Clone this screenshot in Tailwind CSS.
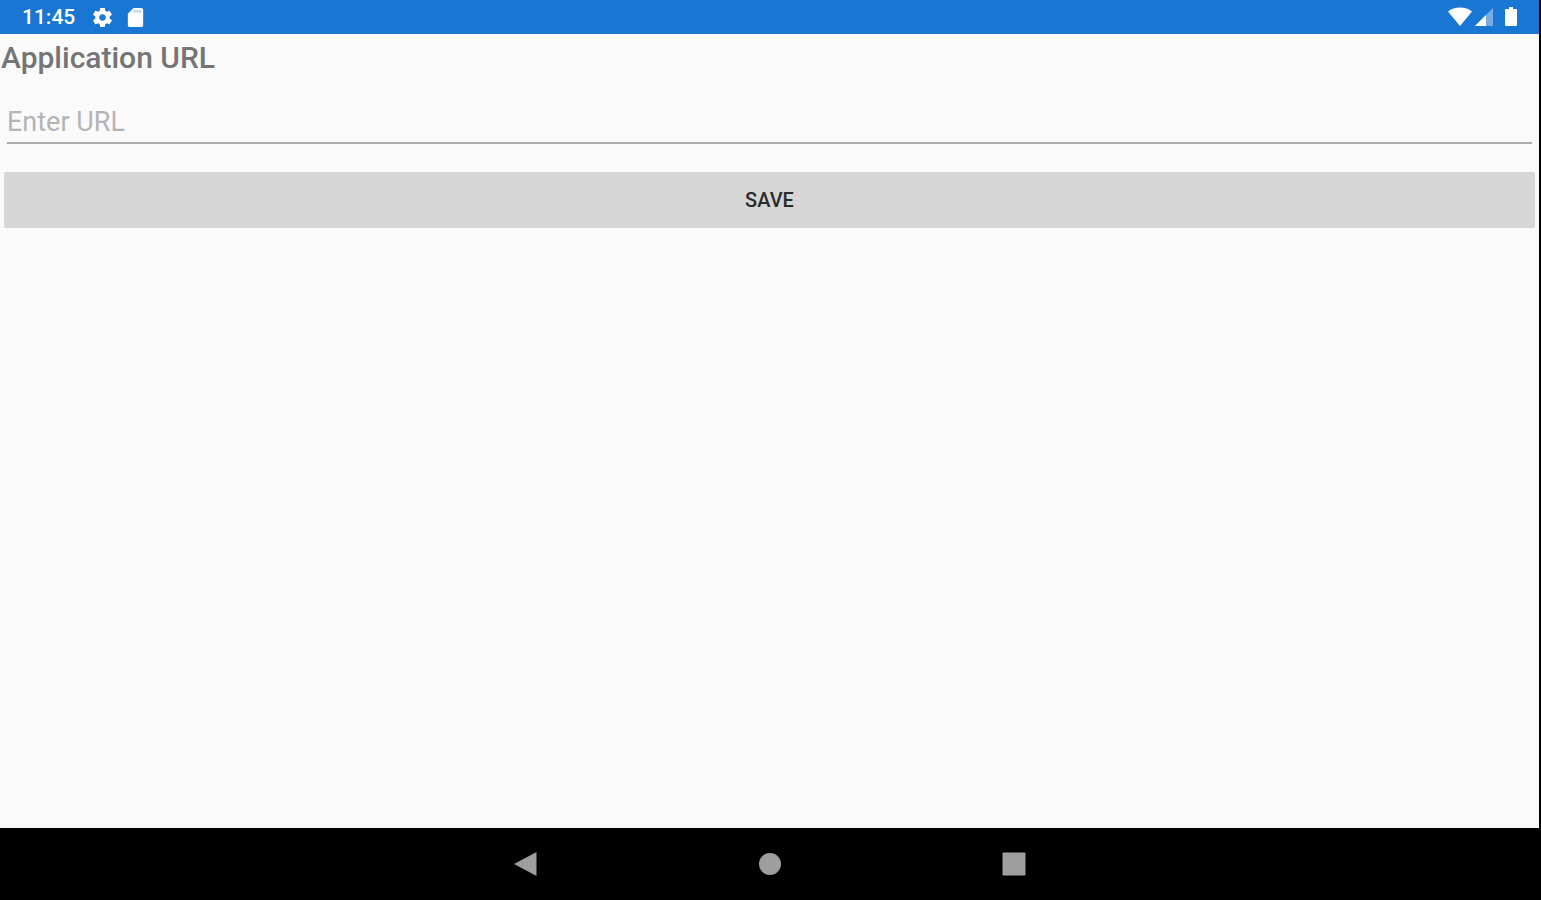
<!DOCTYPE html>
<html lang="en">
<head>
  <meta charset="UTF-8" />
  <meta name="viewport" content="width=device-width, initial-scale=1.0" />
  <title>Application URL</title>
  <script src="https://cdn.jsdelivr.net/npm/@tailwindcss/browser@4"></script>
</head>
<body class="bg-[#fafafa] min-h-screen flex flex-col border-r-2 border-black font-[Roboto,sans-serif]">
  <!-- Status bar -->
  <header class="h-[34px] shrink-0 bg-[#1976d2] text-white flex items-center justify-between px-[22px]">
    <div class="flex items-center">
      <span class="text-[21px] leading-6 font-medium">11:45</span>
      <svg class="ml-4 size-[23px]" viewBox="0 0 24 24" fill="currentColor" aria-hidden="true">
        <path d="M19.43 12.98c.04-.32.07-.64.07-.98s-.03-.66-.07-.98l2.11-1.65c.19-.15.24-.42.12-.64l-2-3.46c-.12-.22-.39-.3-.61-.22l-2.49 1c-.52-.4-1.08-.73-1.69-.98l-.38-2.65C14.46 2.18 14.25 2 14 2h-4c-.25 0-.46.18-.49.42l-.38 2.65c-.61.25-1.17.59-1.69.98l-2.49-1c-.23-.09-.49 0-.61.22l-2 3.46c-.13.22-.07.49.12.64l2.11 1.65c-.04.32-.07.65-.07.98s.03.66.07.98l-2.11 1.65c-.19.15-.24.42-.12.64l2 3.46c.12.22.39.3.61.22l2.49-1c.52.4 1.08.73 1.69.98l.38 2.65c.03.24.24.42.49.42h4c.25 0 .46-.18.49-.42l.38-2.65c.61-.25 1.17-.59 1.69-.98l2.49 1c.23.09.49 0 .61-.22l2-3.46c.12-.22.07-.49-.12-.64l-2.11-1.65zM12 15.5c-1.93 0-3.5-1.57-3.5-3.5s1.57-3.5 3.5-3.5 3.5 1.57 3.5 3.5-1.57 3.5-3.5 3.5z" />
      </svg>
      <svg class="ml-2.5 size-[23px]" viewBox="0 0 24 24" aria-hidden="true">
        <path fill="currentColor" d="M18 2h-8L4 8v12c0 1.100.9 2 2 2h12c1.100 0 2-.9 2-2V4c0-1.100-.9-2-2-2z" />
        <path stroke="#1976d2" stroke-opacity=".35" stroke-width="2" d="M11 4v3M14 4v3M17 4v3" />
      </svg>
    </div>
    <div class="flex items-center">
      <svg class="w-6 h-5" viewBox="0 0 24 20" fill="currentColor" aria-hidden="true">
        <path d="M0 4.500C3 2 7.300.5 12 .5s9 1.500 12 4L12 19z" />
      </svg>
      <svg class="ml-[3px] w-[18px] h-5" viewBox="0 0 18 20" fill="currentColor" aria-hidden="true">
        <path fill-opacity=".4" d="M18 1v18H0z" />
        <path d="M11 8v11H0z" />
      </svg>
      <svg class="ml-3 w-3 h-5" viewBox="0 0 12 20" fill="currentColor" aria-hidden="true">
        <path d="M4 0h4v2h3q1 0 1 1v15q0 1-1 1H1q-1 0-1-1V3q0-1 1-1h3z" />
      </svg>
    </div>
  </header>

  <!-- Settings form -->
  <main class="flex-1">
    <form id="urlForm">
      <label for="url" class="block pt-2 pl-px text-[30px] leading-8 font-medium text-[#757575]">Application URL</label>
      <div class="px-[7px] pt-8">
        <input type="text" id="url" name="url" placeholder="Enter URL"
          class="block w-full h-[38px] pb-1 border-b-2 border-[#ababab] text-[27px] leading-8 text-[#717171] placeholder:text-[#b4b4b4] outline-none" />
      </div>
      <div class="px-1 pt-7">
        <button type="submit" class="block w-full h-14 rounded-xs bg-[#d6d6d6] text-[20px] leading-6 font-medium text-[#2b2b2b]">SAVE</button>
      </div>
    </form>
  </main>

  <!-- Navigation bar -->
  <nav class="h-[72px] shrink-0 bg-black text-[#9e9e9e] flex items-center justify-center gap-[220px]">
    <button type="button" aria-label="Back">
      <svg class="size-6" viewBox="0 0 24 24" fill="currentColor"><path d="M0 12 22.500 0v24z" /></svg>
    </button>
    <button type="button" aria-label="Home">
      <svg class="size-6" viewBox="0 0 24 24" fill="currentColor"><circle cx="12" cy="12" r="11" /></svg>
    </button>
    <button type="button" aria-label="Recent apps">
      <svg class="size-6" viewBox="0 0 24 24" fill="currentColor"><rect x=".5" y=".5" width="23" height="23" rx="1" /></svg>
    </button>
  </nav>

  <script>
    const form = document.getElementById('urlForm');

    form.addEventListener('submit', (e) => {
      e.preventDefault();
      localStorage.setItem('applicationUrl', form.url.value);
    });
  </script>
</body>
</html>
